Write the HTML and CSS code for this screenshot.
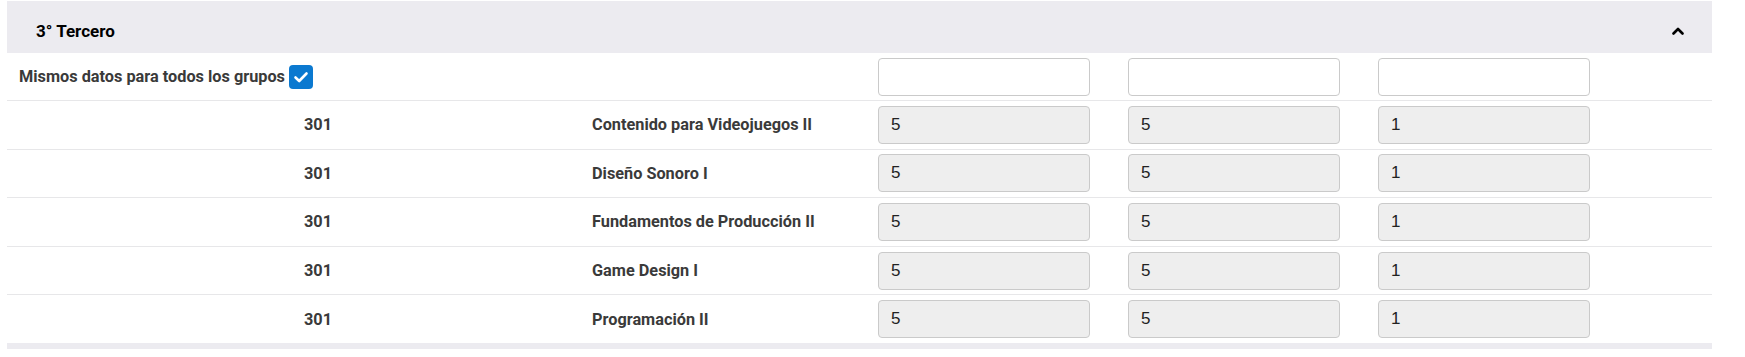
FILE: index.html
```html
<!DOCTYPE html>
<html lang="es">
<head>
<meta charset="utf-8">
<title>3° Tercero</title>
<link rel="stylesheet" href="styles.css">
</head>
<body>
<section class="card">
  <header class="card-header">
    <h2 class="card-title">3° Tercero</h2>
    <svg class="chevron" width="12" height="8" viewBox="0 0 12 8"><polyline points="1.5,6.5 6,2 10.5,6.5" fill="none" stroke="#000" stroke-width="2.6" stroke-linecap="round" stroke-linejoin="round"/></svg>
  </header>
  <div class="table">
    <div class="row row-head">
      <div class="same">
        <span>Mismos datos para todos los grupos</span>
        <span class="checkbox"><svg width="24" height="24" viewBox="0 0 24 24"><polyline points="6.5,12.5 10.2,16 17.5,8.5" fill="none" stroke="#fff" stroke-width="2.6" stroke-linecap="round" stroke-linejoin="round"/></svg></span>
      </div>
      <input class="field" type="text">
      <input class="field" type="text">
      <input class="field" type="text">
    </div>
    <div class="row">
      <div class="group">301</div>
      <div class="subject">Contenido para Videojuegos II</div>
      <input class="field" type="text" value="5" disabled>
      <input class="field" type="text" value="5" disabled>
      <input class="field" type="text" value="1" disabled>
    </div>
    <div class="row">
      <div class="group">301</div>
      <div class="subject">Diseño Sonoro I</div>
      <input class="field" type="text" value="5" disabled>
      <input class="field" type="text" value="5" disabled>
      <input class="field" type="text" value="1" disabled>
    </div>
    <div class="row">
      <div class="group">301</div>
      <div class="subject">Fundamentos de Producción II</div>
      <input class="field" type="text" value="5" disabled>
      <input class="field" type="text" value="5" disabled>
      <input class="field" type="text" value="1" disabled>
    </div>
    <div class="row">
      <div class="group">301</div>
      <div class="subject">Game Design I</div>
      <input class="field" type="text" value="5" disabled>
      <input class="field" type="text" value="5" disabled>
      <input class="field" type="text" value="1" disabled>
    </div>
    <div class="row">
      <div class="group">301</div>
      <div class="subject">Programación II</div>
      <input class="field" type="text" value="5" disabled>
      <input class="field" type="text" value="5" disabled>
      <input class="field" type="text" value="1" disabled>
    </div>
  </div>
  <div class="card-footer"></div>
</section>
</body>
</html>
```
FILE: styles.css
```css
* { box-sizing: border-box; }
html, body { background: #fff; }
body {
  margin: 1px 0 0 7px;
  width: 1705px;
  font-family: Roboto, "Liberation Sans", Arial, sans-serif;
}
.card { width: 1705px; }
.card-header {
  height: 52px;
  padding: 8px 29px 0 29px;
  background: #ecebf0;
  display: flex;
  align-items: center;
  justify-content: space-between;
}
.card-title {
  margin: 0;
  font-size: 17px;
  font-weight: 700;
  color: #000;
}
.chevron { display: block; margin-right: -1px; }
.table { margin: 0 -6px 0 -7px; }
.row {
  display: grid;
  grid-template-columns: 554px 248px 212px 212px 212px;
  column-gap: 38px;
  align-items: center;
  height: 48.6px;
  border-bottom: 1px solid #e7e7e9;
  font-size: 16.3px;
  font-weight: 700;
  color: #3a3a3a;
}
.row-head { height: 48px; }
.same {
  grid-column: 1 / span 2;
  display: flex;
  align-items: center;
  gap: 4px;
  padding-left: 19px;
}
.checkbox {
  flex: none;
  width: 24px;
  height: 24px;
  border-radius: 4px;
  background: #0b79d0;
  display: block;
}
.checkbox svg { display: block; }
.group { text-align: center; padding-left: 82px; }
.subject { white-space: nowrap; }
.field {
  width: 212px;
  height: 38px;
  border: 1px solid #cacaca;
  border-radius: 4px;
  background: #fff;
  padding: 0 12px;
  font-family: "Liberation Sans", Arial, sans-serif;
  font-size: 17px;
  color: #222;
  margin: 0;
}
.field:disabled { background: #eeeeee; color: #222; }
.card-footer {
  height: 6px;
  background: #ecebf0;
  margin-top: -1px;
  position: relative;
}
```
